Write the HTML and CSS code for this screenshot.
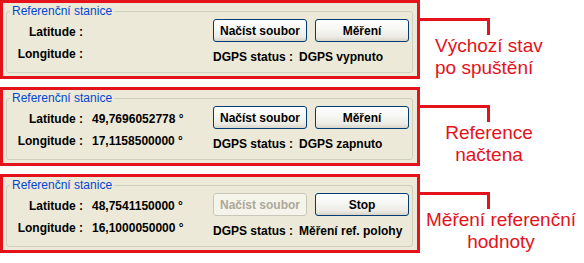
FILE: index.html
```html
<!DOCTYPE html>
<html lang="cs">
<head>
<meta charset="utf-8">
<title>Referenční stanice</title>
<link rel="stylesheet" href="styles.css">
</head>
<body>
<div class="page">
  <div class="row">
    <div class="panel">
      <fieldset class="group">
        <legend class="group-title">Referenční stanice</legend>
        <div class="grid">
          <div class="label lat">Latitude :</div>
          <div class="value lat"></div>
          <div class="buttons">
            <button class="btn" type="button">Načíst soubor</button>
            <button class="btn" type="button">Měření</button>
          </div>
          <div class="label lon">Longitude :</div>
          <div class="value lon"></div>
          <div class="status"><span class="status-label">DGPS status :</span><span class="status-value">DGPS vypnuto</span></div>
        </div>
      </fieldset>
    </div>
    <div class="note">
      <div class="connector"></div>
      <div class="note-text note-first">Výchozí stav<br>po spuštění</div>
    </div>
  </div>

  <div class="row">
    <div class="panel">
      <fieldset class="group">
        <legend class="group-title">Referenční stanice</legend>
        <div class="grid">
          <div class="label lat">Latitude :</div>
          <div class="value lat">49,7696052778 °</div>
          <div class="buttons">
            <button class="btn" type="button">Načíst soubor</button>
            <button class="btn" type="button">Měření</button>
          </div>
          <div class="label lon">Longitude :</div>
          <div class="value lon">17,1158500000 °</div>
          <div class="status"><span class="status-label">DGPS status :</span><span class="status-value">DGPS zapnuto</span></div>
        </div>
      </fieldset>
    </div>
    <div class="note">
      <div class="connector"></div>
      <div class="note-text note-second">Reference<br>načtena</div>
    </div>
  </div>

  <div class="row">
    <div class="panel">
      <fieldset class="group">
        <legend class="group-title">Referenční stanice</legend>
        <div class="grid">
          <div class="label lat">Latitude :</div>
          <div class="value lat">48,7541150000 °</div>
          <div class="buttons">
            <button class="btn" type="button" disabled>Načíst soubor</button>
            <button class="btn" type="button">Stop</button>
          </div>
          <div class="label lon">Longitude :</div>
          <div class="value lon">16,1000050000 °</div>
          <div class="status"><span class="status-label">DGPS status :</span><span class="status-value">Měření ref. polohy</span></div>
        </div>
      </fieldset>
    </div>
    <div class="note">
      <div class="connector"></div>
      <div class="note-text note-third">Měření referenční<br>hodnoty</div>
    </div>
  </div>
</div>
</body>
</html>
```

FILE: styles.css
```css
html, body {
  margin: 0;
  padding: 0;
  background: #ffffff;
}

.page {
  display: flex;
  flex-direction: column;
  gap: 8px;
  width: 584px;
}

.row {
  display: flex;
  height: 79px;
}

.panel {
  width: 420px;
  height: 79px;
  box-sizing: border-box;
  border: 3px solid #e3121b;
  background: #ece9d8;
  padding: 1px 4px 3px 3px;
  flex: none;
}

.group {
  margin: 0;
  padding: 0;
  border: 1px solid #d0d0bf;
  border-radius: 3px;
  min-width: 0;
}

.group-title {
  margin-left: 3px;
  padding: 0 2px;
  font-family: "Liberation Sans", Arial, sans-serif;
  font-size: 12px;
  line-height: 15px;
  color: #0046d5;
}

.grid {
  display: grid;
  grid-template-columns: 76px 130px 199px;
  grid-template-rows: 23px 30px;
  font-family: "Liberation Sans", Arial, sans-serif;
  font-weight: bold;
  font-size: 12px;
  line-height: 15px;
  color: #000000;
}

.label {
  text-align: right;
  white-space: nowrap;
}

.value {
  padding-left: 9px;
  white-space: nowrap;
}

.lat {
  padding-top: 6px;
}

.lon {
  padding-top: 5px;
}

.buttons {
  display: flex;
  gap: 8px;
}

.btn {
  width: 94px;
  height: 23px;
  padding: 0;
  box-sizing: border-box;
  border: 1px solid #003c74;
  border-radius: 3px;
  background: linear-gradient(#ffffff 0%, #f6f6f2 45%, #ecebe5 80%, #d8d4c8 100%);
  font-family: "Liberation Sans", Arial, sans-serif;
  font-weight: bold;
  font-size: 12px;
  color: #000000;
}

.btn:disabled {
  border-color: #c9c7ba;
  background: #f5f4ea;
  color: #aca899;
}

.status {
  display: flex;
  gap: 6px;
  padding-top: 8px;
  white-space: nowrap;
}

.note {
  display: flex;
  flex-direction: column;
  flex: 1;
}

.connector {
  margin-top: 18px;
  width: 70px;
  height: 17px;
  box-sizing: border-box;
  border-top: 3px solid #e3121b;
  border-right: 3px solid #e3121b;
}

.note-text {
  font-family: "Liberation Sans", Arial, sans-serif;
  font-size: 19px;
  line-height: 22px;
  color: #e3121b;
  white-space: nowrap;
}

.note-first {
  padding-left: 15px;
}

.note-second {
  width: 138px;
  text-align: center;
}

.note-third {
  width: 162px;
  text-align: center;
}
```
